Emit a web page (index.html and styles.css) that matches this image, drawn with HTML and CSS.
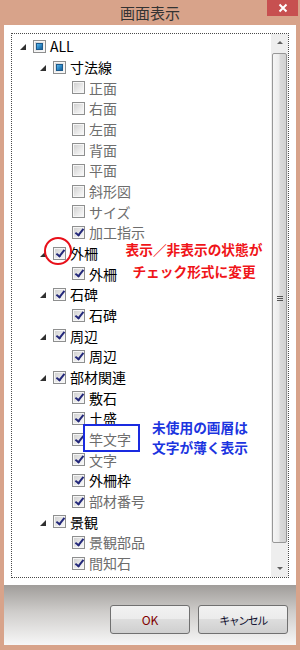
FILE: index.html
```html
<!DOCTYPE html>
<html lang="ja">
<head>
    <meta charset="UTF-8">
    <meta name="viewport" content="width=device-width, initial-scale=1.0">
    <title>画面表示</title>
    <link rel="stylesheet" href="styles.css">
</head>
<body>

    <div class="window">
        <div class="titlebar">
            <span class="title">画面表示</span>
            <button class="close" aria-label="閉じる">
                <svg width="10" height="10" viewBox="0 0 10 10">
                    <path d="M1.5 1.5 L8.5 8.5 M8.5 1.5 L1.5 8.5" stroke="#fff" stroke-width="2" fill="none"/>
                </svg>
            </button>
        </div>

        <div class="panel">
            <div class="tree">
                <div class="list">
                    <div class="row lv1"><span class="exp"></span><span class="cb mixed"></span><span class="label">ALL</span></div>
                    <div class="row lv2"><span class="exp"></span><span class="cb mixed"></span><span class="label">寸法線</span></div>
                    <div class="row lv3"><span class="cb"></span><span class="label dim">正面</span></div>
                    <div class="row lv3"><span class="cb"></span><span class="label dim">右面</span></div>
                    <div class="row lv3"><span class="cb"></span><span class="label dim">左面</span></div>
                    <div class="row lv3"><span class="cb"></span><span class="label dim">背面</span></div>
                    <div class="row lv3"><span class="cb"></span><span class="label dim">平面</span></div>
                    <div class="row lv3"><span class="cb"></span><span class="label dim">斜形図</span></div>
                    <div class="row lv3"><span class="cb"></span><span class="label dim">サイズ</span></div>
                    <div class="row lv3"><span class="cb on"></span><span class="label dim">加工指示</span></div>
                    <div class="row lv2"><span class="exp"></span><span class="cb on"></span><span class="label">外柵</span></div>
                    <div class="row lv3"><span class="cb on"></span><span class="label">外柵</span></div>
                    <div class="row lv2"><span class="exp"></span><span class="cb on"></span><span class="label">石碑</span></div>
                    <div class="row lv3"><span class="cb on"></span><span class="label">石碑</span></div>
                    <div class="row lv2"><span class="exp"></span><span class="cb on"></span><span class="label">周辺</span></div>
                    <div class="row lv3"><span class="cb on"></span><span class="label">周辺</span></div>
                    <div class="row lv2"><span class="exp"></span><span class="cb on"></span><span class="label">部材関連</span></div>
                    <div class="row lv3"><span class="cb on"></span><span class="label">敷石</span></div>
                    <div class="row lv3"><span class="cb on"></span><span class="label">土盛</span></div>
                    <div class="row lv3"><span class="cb on"></span><span class="label dim">竿文字</span></div>
                    <div class="row lv3"><span class="cb on"></span><span class="label dim">文字</span></div>
                    <div class="row lv3"><span class="cb on"></span><span class="label">外柵枠</span></div>
                    <div class="row lv3"><span class="cb on"></span><span class="label dim">部材番号</span></div>
                    <div class="row lv2"><span class="exp"></span><span class="cb on"></span><span class="label">景観</span></div>
                    <div class="row lv3"><span class="cb on"></span><span class="label dim">景観部品</span></div>
                    <div class="row lv3"><span class="cb on"></span><span class="label dim">間知石</span></div>

                    <!-- annotations -->
                    <span class="mark-circle"></span>
                    <div class="note red">表示／非表示の状態が<br>チェック形式に変更</div>
                    <span class="mark-box"></span>
                    <div class="note blue">未使用の画層は<br>文字が薄く表示</div>
                </div>

                <div class="scroll">
                    <div class="sbtn"><span class="arrow-up"></span></div>
                    <div class="track">
                        <div class="thumb"><span class="grip"></span></div>
                    </div>
                    <div class="sbtn"><span class="arrow-down"></span></div>
                </div>
            </div>

            <div class="footer">
                <button class="btn ok">OK</button>
                <button class="btn cancel">キャンセル</button>
            </div>
        </div>
    </div>

</body>
</html>
```

FILE: styles.css
```css
body {
    margin: 0;
    background-color: #d8a38a;
    font-family: "Noto Sans CJK JP", "Noto Sans", sans-serif;
}

.window {
    width: 300px;
    height: 650px;
    display: flex;
    flex-direction: column;
}

.titlebar {
    height: 25px;
    display: grid;
    grid-template-columns: 1fr auto 1fr;
}

.title {
    grid-column: 2;
    font-size: 15px;
    line-height: 25px;
    color: #333;
}

.close {
    grid-column: 3;
    justify-self: end;
    align-self: start;
    width: 31px;
    height: 16px;
    margin-right: 2px;
    padding: 0;
    border: none;
    background-color: #c75050;
    display: flex;
    align-items: center;
    justify-content: center;
}

.panel {
    margin: 0 4px;
    height: 620px;
    background-color: #fff;
    display: flex;
    flex-direction: column;
}

.tree {
    margin: 8px 7px 0 7px;
    height: 545px;
    box-sizing: border-box;
    border: 1px dotted #4a4a4a;
    display: flex;
}

.list {
    flex: 1;
    position: relative;
    padding-top: 2px;
}

.row {
    height: 20.68px;
    display: flex;
    align-items: center;
}

.row.lv1 { padding-left: 8px; }
.row.lv2 { padding-left: 28px; }
.row.lv3 { padding-left: 60px; }

.exp {
    width: 13px;
    height: 13px;
    display: flex;
    align-items: center;
}

.exp::before {
    content: "";
    width: 0;
    height: 0;
    border-left: 6px solid transparent;
    border-bottom: 6px solid #303030;
    margin-top: 2px;
}

.cb {
    position: relative;
    width: 13px;
    height: 13px;
    box-sizing: border-box;
    border: 1px solid #8e8f8f;
    background: linear-gradient(135deg, #cdcdcd 0%, #ebebeb 60%, #fbfbfb 100%);
    box-shadow: inset 0 0 0 1px #f6f6f6;
}

.cb.mixed::after {
    content: "";
    position: absolute;
    left: 2px;
    top: 2px;
    width: 7px;
    height: 7px;
    box-sizing: border-box;
    border: 1px solid #1d5a8c;
    background: linear-gradient(135deg, #5cb6ea 0%, #2a86c4 55%, #1b5f94 100%);
}

.cb.on::after {
    content: "";
    position: absolute;
    left: 3.5px;
    top: 0;
    width: 3px;
    height: 7px;
    border-right: 2px solid #23287a;
    border-bottom: 2px solid #23287a;
    transform: rotate(38deg);
}

.label {
    margin-left: 4px;
    font-size: 14px;
    line-height: 20px;
    color: #000;
    white-space: nowrap;
}

.label.dim {
    color: #6d6d6d;
}

/* annotations over the tree */
.mark-circle {
    position: absolute;
    left: 32px;
    top: 203px;
    width: 28px;
    height: 28px;
    box-sizing: border-box;
    border: 2px solid #e8101a;
    border-radius: 50%;
}

.mark-box {
    position: absolute;
    left: 71px;
    top: 390px;
    width: 57px;
    height: 28px;
    box-sizing: border-box;
    border: 2px solid #1a2be0;
}

.note {
    position: absolute;
    font-weight: 700;
    font-size: 13.7px;
    text-align: center;
    white-space: nowrap;
    text-shadow: 0 0 2px #fff, 0 0 2px #fff;
}

.note.red {
    left: 107px;
    top: 204px;
    width: 150px;
    line-height: 22px;
    color: #f01418;
}

.note.blue {
    left: 133px;
    top: 383px;
    width: 110px;
    line-height: 20px;
    color: #1c35e0;
}

/* scrollbar */
.scroll {
    width: 17px;
    display: flex;
    flex-direction: column;
    background-color: #eeeeee;
}

.sbtn {
    height: 17px;
    display: flex;
    align-items: center;
    justify-content: center;
}

.arrow-up {
    width: 0;
    height: 0;
    border-left: 3px solid transparent;
    border-right: 3px solid transparent;
    border-bottom: 3px solid #606060;
}

.arrow-down {
    width: 0;
    height: 0;
    border-left: 3px solid transparent;
    border-right: 3px solid transparent;
    border-top: 3px solid #606060;
}

.track {
    flex: 1;
    padding: 2px 1px 0 1px;
}

.thumb {
    height: 490px;
    box-sizing: border-box;
    border: 1px solid #979797;
    border-radius: 2px;
    background: linear-gradient(to right, #f5f5f5 0%, #ececec 45%, #dadada 55%, #d2d2d2 100%);
    display: flex;
    align-items: center;
    justify-content: center;
}

.grip {
    width: 6px;
    height: 5px;
    background: repeating-linear-gradient(#555 0 1px, transparent 1px 2px);
}

/* footer */
.footer {
    margin-top: 7px;
    height: 60px;
    box-sizing: border-box;
    padding: 20px 8px 0 0;
    display: flex;
    justify-content: flex-end;
    align-items: flex-start;
    gap: 8px;
    background: linear-gradient(#a09d9a 0%, #cfcdcb 45%, #f7f7f7 100%);
}

.btn {
    height: 29px;
    padding: 0;
    border: 1px solid #707070;
    border-radius: 3px;
    background: linear-gradient(#f2f2f2 0%, #ebebeb 50%, #dddddd 50%, #cfcfcf 100%);
    font-family: "Noto Sans CJK JP", "Noto Sans", sans-serif;
    font-size: 11px;
}

.btn.ok {
    width: 80px;
    font-size: 12px;
    color: #800000;
}

.btn.cancel {
    width: 90px;
    color: #101030;
    letter-spacing: -1.5px;
}
```
